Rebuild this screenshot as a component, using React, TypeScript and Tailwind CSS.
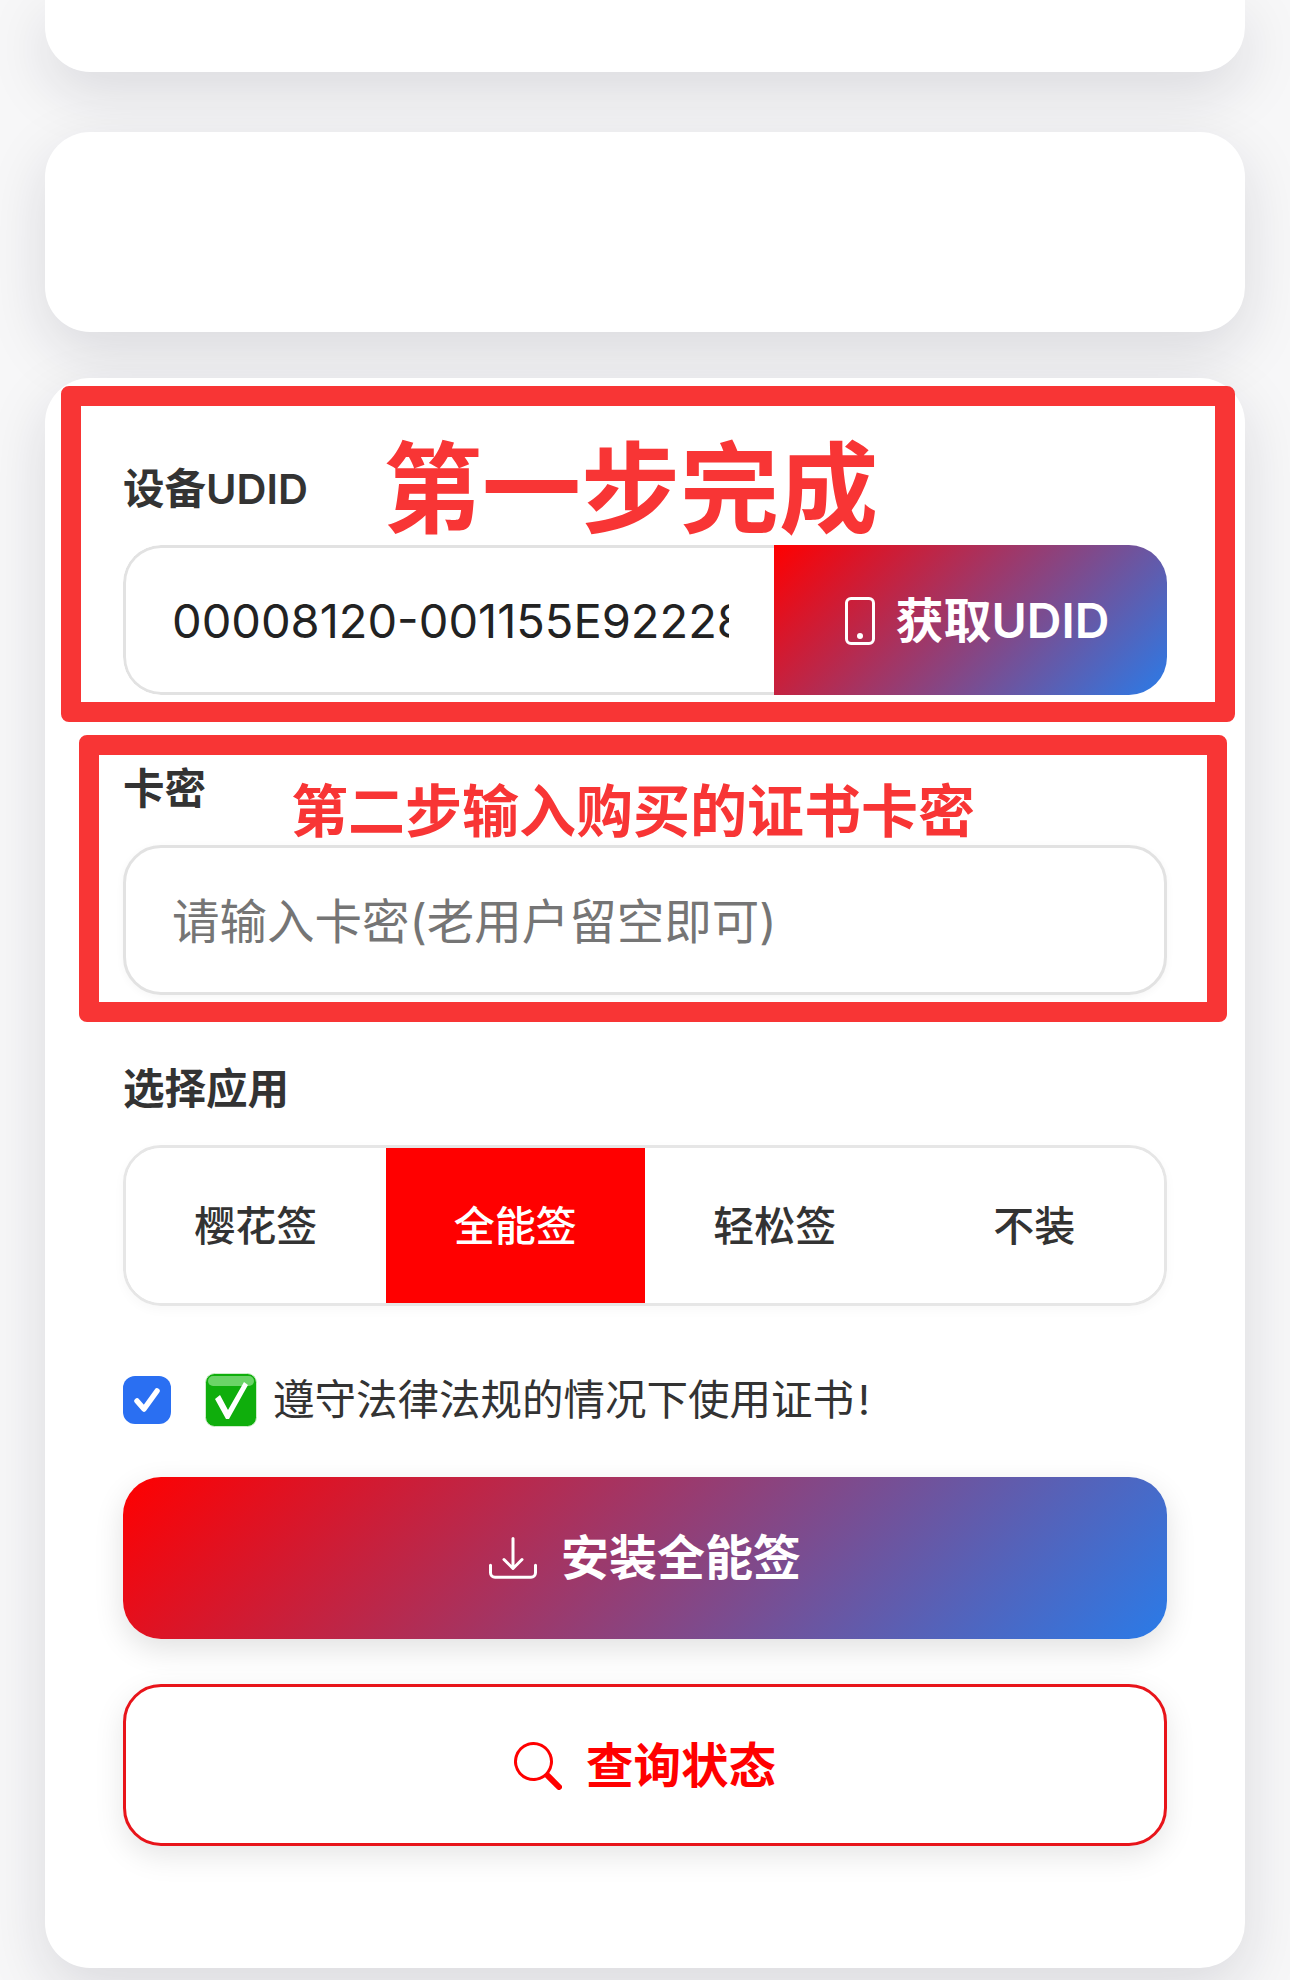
import { BsDownload, BsPhone, BsSearch } from "react-icons/bs";

const apps = ["樱花签", "全能签", "轻松签", "不装"];

const labelClass = "h-14 mb-[29px] pt-[1px] text-[41.5px] leading-[56px] font-semibold text-[#333333]";
const gradient = "bg-[linear-gradient(135deg,#ff0000,#2a7be8)]";
const cardShadow = "shadow-[0_20px_60px_rgba(20,25,45,0.13)]";

export default function App() {
  return (
    <div className="w-[1290px] h-[1980px] overflow-hidden bg-[#f7f7f8] font-['Inter','Noto_Sans_CJK_SC',sans-serif]">
      <div className={`mx-[45px] h-[72px] rounded-b-[45px] bg-white ${cardShadow}`} />
      <div className={`mx-[45px] mt-[60px] h-[200px] rounded-[45px] bg-white ${cardShadow}`} />

      <div className={`relative mx-[45px] mt-[46px] h-[1590px] rounded-[45px] bg-white px-[78px] pt-[82px] ${cardShadow}`}>
        {/* UDID */}
        <div className={labelClass}>设备UDID</div>
        <div className="mb-[65px] flex h-[150px] overflow-hidden rounded-[38px]">
          <input
            readOnly
            value="00008120-001155E922280C1E"
            className="min-w-0 flex-1 rounded-l-[38px] border-[3px] border-r-0 border-[#e2e2e2] bg-white pl-[46px] pr-[45px] pt-[2px] text-[47px] text-[#222222] outline-none"
          />
          <button className={`flex w-[393px] shrink-0 items-center justify-center gap-[12px] ${gradient} pl-[4px] pt-[1px] text-[48px] font-semibold text-white`}>
            <BsPhone size={48} />
            获取UDID
          </button>
        </div>

        {/* card key */}
        <div className={labelClass}>卡密</div>
        <input
          readOnly
          placeholder="请输入卡密(老用户留空即可)"
          className="mb-[65px] block h-[150px] w-full rounded-[38px] border-[3px] border-[#e2e2e2] bg-white pl-[46px] pr-[45px] pt-[2px] text-[47.5px] shadow-[0_2px_8px_rgba(0,0,0,0.04)] outline-none placeholder:text-[#757575]"
        />

        {/* app choice */}
        <div className={labelClass}>选择应用</div>
        <div className="mb-[67px] grid h-[161px] grid-cols-4 overflow-hidden rounded-[38px] border-[3px] border-[#e6e6e6] shadow-[0_4px_12px_rgba(0,0,0,0.03)]">
          {apps.map((app) => (
            <div
              key={app}
              className={
                app === "全能签"
                  ? "flex items-center justify-center bg-[#ff0000] pt-[3px] text-[41px] font-medium text-white"
                  : "flex items-center justify-center bg-white pt-[3px] text-[41px] font-medium text-[#333333]"
              }
            >
              {app}
            </div>
          ))}
        </div>

        {/* agreement */}
        <div className="mb-[50px] flex h-[54px] items-center">
          <span className="flex h-12 w-12 items-center justify-center rounded-xl bg-[#2a6ff2]">
            <svg viewBox="0 0 48 48" className="h-12 w-12" fill="none" stroke="white" strokeWidth="5.5" strokeLinecap="round" strokeLinejoin="round">
              <path d="M14 25l7 8 13-18" />
            </svg>
          </span>
          <svg viewBox="0 0 52 54" className="ml-[34px] h-[54px] w-[52px]">
            <rect x="0.5" y="0.5" width="51" height="53" rx="9" fill="#0fae0c" stroke="#cfeccb" />
            <rect x="3" y="3" width="46" height="10" rx="5" fill="#6bd467" />
            <path d="M10 26l5-4 8 15 16-28 4 3-19 34h-3z" fill="white" />
          </svg>
          <span className="ml-[16px] text-[41.5px] leading-[54px] text-[#333333]">
            遵守法律法规的情况下使用证书<span className="ml-[4px]">!</span>
          </span>
        </div>

        {/* actions */}
        <button className={`mb-[45px] flex h-[162px] w-full items-center justify-center gap-[24px] rounded-[38px] ${gradient} text-[48px] font-bold text-white shadow-[0_10px_30px_rgba(0,0,0,0.12)]`}>
          <BsDownload size={48} />
          安装全能签
        </button>
        <button className="flex h-[162px] w-full items-center justify-center gap-[24px] rounded-[38px] border-[3px] border-[#e8141a] bg-white pt-[2px] text-[47.5px] font-bold text-[#ff0000] shadow-[0_10px_30px_rgba(0,0,0,0.1)]">
          <BsSearch size={48} />
          查询状态
        </button>

        {/* red annotations over the form */}
        <div className="absolute left-[16px] top-[8px] h-[336px] w-[1174px] rounded-lg border-[20px] border-[#f83535]">
          <span className="absolute left-[302px] top-[28px] text-[99px] leading-[110px] font-bold text-[#f83535]">第一步完成</span>
        </div>
        <div className="absolute left-[34px] top-[357px] h-[287px] w-[1148px] rounded-lg border-[20px] border-[#f83535]">
          <span className="absolute left-[192px] top-[22px] text-[57px] leading-[70px] font-bold text-[#f83535]">第二步输入购买的证书卡密</span>
        </div>
      </div>
    </div>
  );
}
